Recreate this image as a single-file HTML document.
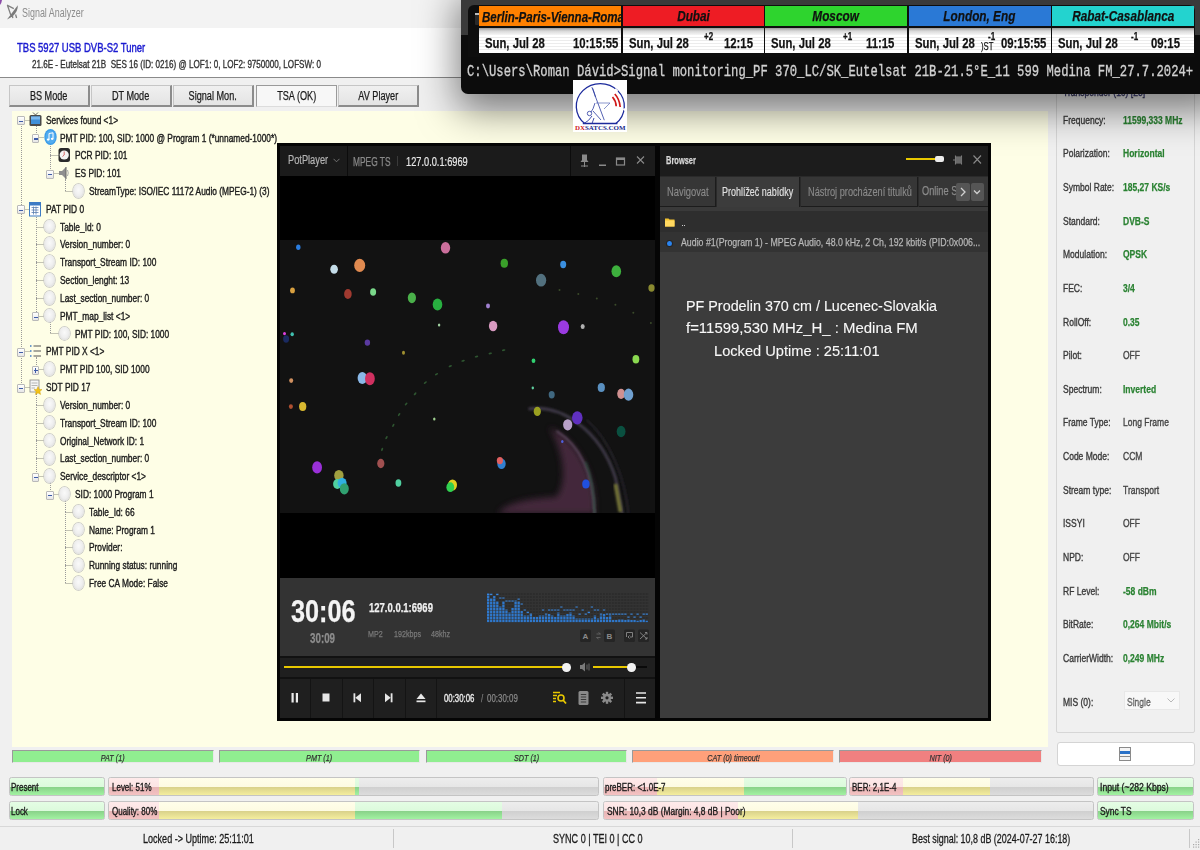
<!DOCTYPE html>
<html><head><meta charset="utf-8">
<style>
*{margin:0;padding:0;box-sizing:border-box}
html,body{width:1200px;height:850px;overflow:hidden;background:#f0f0f0;font-family:"Liberation Sans",sans-serif;position:relative}
body{-webkit-text-stroke-width:.25px}
.a{position:absolute}
.t{position:absolute;white-space:nowrap;transform-origin:0 0;transform:scaleX(.76)}
.c{display:inline-block;white-space:nowrap;transform:scaleX(.76)}
.btn{position:absolute;top:85px;height:22px;width:81px;background:linear-gradient(#f0f0f0,#e4e4e4);border:1px solid #c6c6c6;border-right:2px solid #8c8c8c;border-bottom:2px solid #8c8c8c;font-size:12px;color:#1a1a1a;text-align:center;line-height:21px}
.row{position:absolute;height:17px;font-size:11px;color:#1c1c1c;-webkit-text-stroke:.4px #1c1c1c;white-space:nowrap;line-height:17px;transform-origin:0 0;transform:scaleX(.76)}
.sb{position:absolute;top:750px;height:13px;font-size:9.5px;font-style:italic;color:#333;text-align:center;line-height:14px;border-top:1px solid #9a9a9a;border-left:1px solid #9a9a9a;border-right:1px solid #e8e8e8;border-bottom:1px solid #e8e8e8}
.pb{position:absolute;height:19px;border:1.5px solid #c4c4c4;border-radius:2.5px;overflow:hidden;background:linear-gradient(#ededed 0,#e6e6e6 52%,#cfcfcf 52%,#dcdcdc 100%)}
.pb .lbl{position:absolute;left:2.5px;top:1px;line-height:17px;font-size:10.5px;color:#1a1a1a;-webkit-text-stroke-width:.35px;white-space:nowrap;transform-origin:0 0;transform:scaleX(.76)}
.seg{position:absolute;top:0;bottom:0}
.gr{background:linear-gradient(#e4fde4 0,#dcfadc 52%,#88d088 52%,#a2f2a2 100%)}
.yl{background:linear-gradient(#fffeea 0,#fdfbe2 52%,#d8d08a 52%,#f4ee9e 100%)}
.rd{background:linear-gradient(#feeaea 0,#fce4e4 52%,#e6b4b4 52%,#f4c2c2 100%)}
.pl{position:absolute;left:1063px;font-size:11.5px;color:#3a3a3a;-webkit-text-stroke:.38px #3a3a3a;white-space:nowrap;transform-origin:0 0;transform:scaleX(.74)}
.pv{position:absolute;left:1123px;font-size:11.5px;color:#2a8232;font-weight:bold;white-space:nowrap;transform-origin:0 0;transform:scaleX(.74)}
.pv.g{color:#444;font-weight:normal;-webkit-text-stroke:.38px #444}
.st{position:absolute;top:832px;font-size:12.5px;color:#1a1a1a;-webkit-text-stroke:.3px #1a1a1a;white-space:nowrap;transform-origin:0 0;transform:scaleX(.724)}
.sph{position:absolute;width:10.8px;height:13.8px;border-radius:50%;background:radial-gradient(ellipse at 50% 42%,#fafafa 0,#eeeeee 50%,#dcdcdc 78%,#bdbdbd 100%);box-shadow:0 0 0 .7px #c2c2c2}
.exp{position:absolute;width:7.6px;height:9px;border:1px solid #b9b9b9;background:linear-gradient(#fff,#e6e6e6);border-radius:1px}
.exp:after{content:"";position:absolute;left:.9px;top:3.3px;width:4px;height:1.2px;background:#3e5ca8}
.exp.p:before{content:"";position:absolute;left:2.3px;top:1.6px;width:1.2px;height:4.6px;background:#3e5ca8}
.vl{position:absolute;width:0;border-left:1px dotted #9a9a9a}
.hl{position:absolute;height:0;border-top:1px solid #c4c4b4}
</style></head><body>
<div class="a" style="left:0;top:0;width:1200px;height:28px;background:#f3f3f3"></div>
<svg class="a" style="left:0;top:0" width="20" height="22" viewBox="0 0 20 22"><path d="M0 0 H2 Q1.6 3 0 5 Z" fill="#8a4aa8"/><path d="M7 19.5 L17.8 5.2 Q18.2 11 12.5 16.5 Z" fill="#7a7a7a"/><path d="M7 5.2 L13.8 8.6 M7.6 5.8 L10.8 15 M12.4 15.5 L12.8 18.2 M15.6 14.5 L16.6 18" stroke="#808080" stroke-width="1.3" fill="none"/></svg>
<div class="t" style="left:22px;top:6px;font-size:12.5px;color:#8c8c8c;-webkit-text-stroke-width:0;transform:scaleX(.715)">Signal Analyzer</div>
<div class="a" style="left:0;top:28px;width:1200px;height:50px;background:#fff;border-bottom:1px solid #8a8a8a"></div>
<div class="t" style="left:17px;top:40px;font-size:13px;color:#1a1ad0;-webkit-text-stroke-width:.45px;transform:scaleX(.73)">TBS 5927 USB DVB-S2 Tuner</div>
<div class="t" style="left:32px;top:58px;font-size:11px;color:#333;-webkit-text-stroke-width:.35px;transform:scaleX(.735)">21.6E - Eutelsat 21B&nbsp; SES 16 (ID: 0216) @ LOF1: 0, LOF2: 9750000, LOFSW: 0</div>

<div class="btn" style="left:9px"><span class="c">BS Mode</span></div>
<div class="btn" style="left:91px"><span class="c">DT Mode</span></div>
<div class="btn" style="left:173px"><span class="c">Signal Mon.</span></div>
<div class="btn" style="left:256px;background:#f7f7f7;border:1px solid #9a9a9a;border-right:1px solid #9a9a9a;border-bottom:1px solid #dcdcdc"><span class="c">TSA (OK)</span></div>
<div class="btn" style="left:338px"><span class="c">AV Player</span></div>

<div class="a" style="left:12px;top:111px;width:1036px;height:636px;background:#fefee6"></div>

<div class="sb" style="left:12px;width:202px;background:#90ee90"><span class="c">PAT (1)</span></div>
<div class="sb" style="left:219px;width:201px;background:#90ee90"><span class="c">PMT (1)</span></div>
<div class="sb" style="left:426px;width:201px;background:#90ee90"><span class="c">SDT (1)</span></div>
<div class="sb" style="left:632px;width:202px;background:#ffa07a"><span class="c">CAT (0) timeout!</span></div>
<div class="sb" style="left:839px;width:203px;background:#f08080"><span class="c">NIT (0)</span></div>
<div class="a" style="left:1057px;top:742px;width:138px;height:24px;background:#fff;border:1px solid #d4d4d4;border-radius:3px"></div>
<svg class="a" style="left:1119px;top:747px" width="12" height="14" viewBox="0 0 12 14"><rect x=".5" y=".5" width="11" height="13" fill="#f4f4f4" stroke="#8a8a8a"/><rect x="1" y="4" width="10" height="3" fill="#2a72c8"/><line x1="1" y1="9.5" x2="11" y2="9.5" stroke="#8a8a8a"/></svg>

<div class="pb gr" style="left:9px;top:777px;width:96px"><span class="lbl" style="left:.5px">Present</span></div>
<div class="pb gr" style="left:9px;top:801px;width:96px"><span class="lbl" style="left:.5px">Lock</span></div>
<div class="pb" style="left:108px;top:777px;width:491px"><div class="seg rd" style="left:0;width:50px"></div><div class="seg yl" style="left:50px;width:196px"></div><div class="seg gr" style="left:246px;width:4px"></div><span class="lbl">Level: 51%</span></div>
<div class="pb" style="left:108px;top:801px;width:491px"><div class="seg rd" style="left:0;width:50px"></div><div class="seg yl" style="left:50px;width:196px"></div><div class="seg gr" style="left:246px;width:147px"></div><span class="lbl">Quality: 80%</span></div>
<div class="pb" style="left:603px;top:777px;width:244px"><div class="seg rd" style="left:0;width:53px"></div><div class="seg yl" style="left:53px;width:87px"></div><div class="seg gr" style="left:140px;width:104px"></div><span class="lbl" style="left:1px">preBER: &lt;1.0E-7</span></div>
<div class="pb" style="left:849px;top:777px;width:245px"><div class="seg rd" style="left:0;width:53px"></div><div class="seg yl" style="left:53px;width:87px"></div><span class="lbl" style="left:1.5px">BER: 2,1E-4</span></div>
<div class="pb" style="left:603px;top:801px;width:491px"><div class="seg rd" style="left:0;width:134px"></div><div class="seg yl" style="left:134px;width:120px"></div><span class="lbl" style="left:2.5px;transform:scaleX(.8)">SNR: 10,3 dB (Margin: 4,8 dB | Poor)</span></div>
<div class="pb gr" style="left:1097px;top:777px;width:97px"><span class="lbl" style="left:1.5px;transform:scaleX(.82)">Input (~282 Kbps)</span></div>
<div class="pb gr" style="left:1097px;top:801px;width:97px"><span class="lbl" style="left:1.5px;transform:scaleX(.8)">Sync TS</span></div>

<div class="a" style="left:0;top:826px;width:1200px;height:24px;border-top:1px solid #d8d8d8;background:#f0f0f0"></div>
<div class="a" style="left:393px;top:829px;width:1px;height:19px;background:#c8c8c8"></div>
<div class="a" style="left:792px;top:829px;width:1px;height:19px;background:#c8c8c8"></div>
<div class="a" style="left:1189px;top:829px;width:1px;height:19px;background:#c8c8c8"></div>
<svg class="a" style="left:1191px;top:836px" width="9" height="14" viewBox="0 0 9 14"><g fill="#a8a8a8"><rect x="7" y="3" width="1.2" height="1.2"/><rect x="4.5" y="5.5" width="1.2" height="1.2"/><rect x="7" y="5.5" width="1.2" height="1.2"/><rect x="2" y="8" width="1.2" height="1.2"/><rect x="4.5" y="8" width="1.2" height="1.2"/><rect x="7" y="8" width="1.2" height="1.2"/><rect x="2" y="10.5" width="1.2" height="1.2"/><rect x="4.5" y="10.5" width="1.2" height="1.2"/><rect x="7" y="10.5" width="1.2" height="1.2"/></g></svg>
<div class="st" style="left:143px">Locked -&gt; Uptime: 25:11:01</div>
<div class="st" style="left:553px">SYNC 0 | TEI 0 | CC 0</div>
<div class="st" style="left:912px;transform:scaleX(.714)">Best signal: 10,8 dB (2024-07-27 16:18)</div>
<div class="hl" style="left:21.0px;top:119.6px;width:8.5px"></div>
<div class="vl" style="left:21.0px;top:119.6px;height:89.1px"></div>
<div class="hl" style="left:35.5px;top:137.4px;width:8.5px"></div>
<div class="vl" style="left:35.5px;top:125.6px;height:11.8px"></div>
<div class="hl" style="left:50.0px;top:155.2px;width:8.5px"></div>
<div class="vl" style="left:50.0px;top:155.2px;height:17.8px"></div>
<div class="vl" style="left:50.0px;top:143.4px;height:11.8px"></div>
<div class="hl" style="left:50.0px;top:173.1px;width:8.5px"></div>
<div class="hl" style="left:64.5px;top:190.9px;width:8.5px"></div>
<div class="vl" style="left:64.5px;top:179.1px;height:11.8px"></div>
<div class="hl" style="left:21.0px;top:208.7px;width:8.5px"></div>
<div class="vl" style="left:21.0px;top:208.7px;height:142.6px"></div>
<div class="hl" style="left:35.5px;top:226.5px;width:8.5px"></div>
<div class="vl" style="left:35.5px;top:226.5px;height:17.8px"></div>
<div class="vl" style="left:35.5px;top:214.7px;height:11.8px"></div>
<div class="hl" style="left:35.5px;top:244.3px;width:8.5px"></div>
<div class="vl" style="left:35.5px;top:244.3px;height:17.8px"></div>
<div class="hl" style="left:35.5px;top:262.2px;width:8.5px"></div>
<div class="vl" style="left:35.5px;top:262.2px;height:17.8px"></div>
<div class="hl" style="left:35.5px;top:280.0px;width:8.5px"></div>
<div class="vl" style="left:35.5px;top:280.0px;height:17.8px"></div>
<div class="hl" style="left:35.5px;top:297.8px;width:8.5px"></div>
<div class="vl" style="left:35.5px;top:297.8px;height:17.8px"></div>
<div class="hl" style="left:35.5px;top:315.6px;width:8.5px"></div>
<div class="hl" style="left:50.0px;top:333.4px;width:8.5px"></div>
<div class="vl" style="left:50.0px;top:321.6px;height:11.8px"></div>
<div class="hl" style="left:21.0px;top:351.3px;width:8.5px"></div>
<div class="vl" style="left:21.0px;top:351.3px;height:35.6px"></div>
<div class="hl" style="left:35.5px;top:369.1px;width:8.5px"></div>
<div class="vl" style="left:35.5px;top:357.3px;height:11.8px"></div>
<div class="hl" style="left:21.0px;top:386.9px;width:8.5px"></div>
<div class="hl" style="left:35.5px;top:404.7px;width:8.5px"></div>
<div class="vl" style="left:35.5px;top:404.7px;height:17.8px"></div>
<div class="vl" style="left:35.5px;top:392.9px;height:11.8px"></div>
<div class="hl" style="left:35.5px;top:422.5px;width:8.5px"></div>
<div class="vl" style="left:35.5px;top:422.5px;height:17.8px"></div>
<div class="hl" style="left:35.5px;top:440.4px;width:8.5px"></div>
<div class="vl" style="left:35.5px;top:440.4px;height:17.8px"></div>
<div class="hl" style="left:35.5px;top:458.2px;width:8.5px"></div>
<div class="vl" style="left:35.5px;top:458.2px;height:17.8px"></div>
<div class="hl" style="left:35.5px;top:476.0px;width:8.5px"></div>
<div class="hl" style="left:50.0px;top:493.8px;width:8.5px"></div>
<div class="vl" style="left:50.0px;top:482.0px;height:11.8px"></div>
<div class="hl" style="left:64.5px;top:511.6px;width:8.5px"></div>
<div class="vl" style="left:64.5px;top:511.6px;height:17.8px"></div>
<div class="vl" style="left:64.5px;top:499.8px;height:11.8px"></div>
<div class="hl" style="left:64.5px;top:529.5px;width:8.5px"></div>
<div class="vl" style="left:64.5px;top:529.5px;height:17.8px"></div>
<div class="hl" style="left:64.5px;top:547.3px;width:8.5px"></div>
<div class="vl" style="left:64.5px;top:547.3px;height:17.8px"></div>
<div class="hl" style="left:64.5px;top:565.1px;width:8.5px"></div>
<div class="vl" style="left:64.5px;top:565.1px;height:17.8px"></div>
<div class="hl" style="left:64.5px;top:582.9px;width:8.5px"></div>
<div class="exp" style="left:17.2px;top:116.3px"></div>
<!--icon tv--><svg class="a" style="left:29.0px;top:111.6px" width="13" height="16" viewBox="0 0 13 16"><path d="M4 0.5 L6.5 3 L9 0.5" stroke="#555" fill="none" stroke-width=".9"/><rect x=".5" y="3" width="12" height="11" rx="1.5" fill="#4a4a4a"/><rect x="2" y="4.5" width="9" height="7.5" fill="#3f8fd8"/><rect x="2" y="4.5" width="9" height="3" fill="#7bb8ee"/></svg>
<div class="row" style="left:45.5px;top:111.7px">Services found &lt;1&gt;</div>
<div class="exp" style="left:31.7px;top:134.1px"></div>
<!--icon music--><svg class="a" style="left:43.5px;top:129.4px" width="13" height="16" viewBox="0 0 13 16"><ellipse cx="6.5" cy="8" rx="6.2" ry="8" fill="#3a9be8"/><ellipse cx="6.5" cy="8" rx="5" ry="6.6" fill="#52acef"/><path d="M5 10.5 V4.5 L9 3.8 V9.5" stroke="#fff" fill="none" stroke-width="1"/><ellipse cx="4.2" cy="10.6" rx="1.4" ry="1.1" fill="#fff"/><ellipse cx="8.2" cy="9.8" rx="1.4" ry="1.1" fill="#fff"/></svg>
<div class="row" style="left:60.0px;top:129.5px">PMT PID: 100, SID: 1000 @ Program 1 (*unnamed-1000*)</div>
<!--icon clock--><svg class="a" style="left:58.0px;top:147.2px" width="13" height="16" viewBox="0 0 13 16"><rect x=".5" y="1" width="11.5" height="14" rx="2.5" fill="#2a2a2a"/><circle cx="6.2" cy="8" r="4.6" fill="#f4f4f4"/><path d="M6.2 8 L6.2 4.5 M6.2 8 L4.5 9.5" stroke="#c33" stroke-width=".7"/></svg>
<div class="row" style="left:74.5px;top:147.3px">PCR PID: 101</div>
<div class="exp" style="left:46.2px;top:169.8px"></div>
<!--icon speaker--><svg class="a" style="left:58.0px;top:165.1px" width="13" height="16" viewBox="0 0 13 16"><path d="M1 6 H4 L8 2 V14 L4 10 H1 Z" fill="#8f8f8f"/><path d="M8 2 V14" stroke="#666"/><path d="M9.5 5 Q11 8 9.5 11" stroke="#aaa" fill="none"/></svg>
<div class="row" style="left:74.5px;top:165.2px">ES PID: 101</div>
<div class="sph" style="left:73.4px;top:184.0px"></div>
<div class="row" style="left:89.0px;top:183.0px">StreamType: ISO/IEC 11172 Audio (MPEG-1) (3)</div>
<div class="exp" style="left:17.2px;top:205.4px"></div>
<!--icon table--><svg class="a" style="left:29.0px;top:200.7px" width="13" height="16" viewBox="0 0 13 16"><rect x=".5" y="1.5" width="11" height="13.5" fill="#fff" stroke="#3d7bc4"/><rect x=".5" y="1.5" width="11" height="3" fill="#3d7bc4"/><path d="M2.5 6.5 H9.5 M2.5 9 H9.5 M2.5 11.5 H9.5 M4.5 5.5 V13.5 M7 5.5 V13.5" stroke="#5a7fb0" stroke-width=".8"/></svg>
<div class="row" style="left:45.5px;top:200.8px">PAT PID 0</div>
<div class="sph" style="left:44.4px;top:219.6px"></div>
<div class="row" style="left:60.0px;top:218.6px">Table_Id: 0</div>
<div class="sph" style="left:44.4px;top:237.4px"></div>
<div class="row" style="left:60.0px;top:236.4px">Version_number: 0</div>
<div class="sph" style="left:44.4px;top:255.3px"></div>
<div class="row" style="left:60.0px;top:254.3px">Transport_Stream ID: 100</div>
<div class="sph" style="left:44.4px;top:273.1px"></div>
<div class="row" style="left:60.0px;top:272.1px">Section_lenght: 13</div>
<div class="sph" style="left:44.4px;top:290.9px"></div>
<div class="row" style="left:60.0px;top:289.9px">Last_section_number: 0</div>
<div class="exp" style="left:31.7px;top:312.3px"></div>
<div class="sph" style="left:44.4px;top:308.7px"></div>
<div class="row" style="left:60.0px;top:307.7px">PMT_map_list &lt;1&gt;</div>
<div class="sph" style="left:58.9px;top:326.5px"></div>
<div class="row" style="left:74.5px;top:325.5px">PMT PID: 100, SID: 1000</div>
<div class="exp" style="left:17.2px;top:348.0px"></div>
<!--icon list--><svg class="a" style="left:29.0px;top:343.3px" width="13" height="16" viewBox="0 0 13 16"><path d="M1 3 H2.5 M1 8 H2.5 M1 13 H2.5" stroke="#3d7bc4" stroke-width="1.6"/><path d="M4.5 3 H12 M4.5 8 H12 M4.5 13 H12" stroke="#555" stroke-width="1.1"/></svg>
<div class="row" style="left:45.5px;top:343.4px">PMT PID X &lt;1&gt;</div>
<div class="exp p" style="left:31.7px;top:365.8px"></div>
<div class="sph" style="left:44.4px;top:362.2px"></div>
<div class="row" style="left:60.0px;top:361.2px">PMT PID 100, SID 1000</div>
<div class="exp" style="left:17.2px;top:383.6px"></div>
<!--icon doc--><svg class="a" style="left:29.0px;top:378.9px" width="13" height="16" viewBox="0 0 13 16"><rect x="1" y="1" width="9" height="12" fill="#f6f6f6" stroke="#888" stroke-width=".8"/><path d="M2.5 4 H8.5 M2.5 6.5 H8.5 M2.5 9 H6" stroke="#999" stroke-width=".7"/><path d="M9 7.5 L10.2 10.4 L13 10.6 L10.9 12.5 L11.6 15.5 L9 13.9 L6.4 15.5 L7.1 12.5 L5 10.6 L7.8 10.4 Z" fill="#f2c21a" stroke="#c99800" stroke-width=".4"/></svg>
<div class="row" style="left:45.5px;top:379.0px">SDT PID 17</div>
<div class="sph" style="left:44.4px;top:397.8px"></div>
<div class="row" style="left:60.0px;top:396.8px">Version_number: 0</div>
<div class="sph" style="left:44.4px;top:415.6px"></div>
<div class="row" style="left:60.0px;top:414.6px">Transport_Stream ID: 100</div>
<div class="sph" style="left:44.4px;top:433.5px"></div>
<div class="row" style="left:60.0px;top:432.5px">Original_Network ID: 1</div>
<div class="sph" style="left:44.4px;top:451.3px"></div>
<div class="row" style="left:60.0px;top:450.3px">Last_section_number: 0</div>
<div class="exp" style="left:31.7px;top:472.7px"></div>
<div class="sph" style="left:44.4px;top:469.1px"></div>
<div class="row" style="left:60.0px;top:468.1px">Service_descriptor &lt;1&gt;</div>
<div class="exp" style="left:46.2px;top:490.5px"></div>
<div class="sph" style="left:58.9px;top:486.9px"></div>
<div class="row" style="left:74.5px;top:485.9px">SID: 1000 Program 1</div>
<div class="sph" style="left:73.4px;top:504.7px"></div>
<div class="row" style="left:89.0px;top:503.7px">Table_Id: 66</div>
<div class="sph" style="left:73.4px;top:522.6px"></div>
<div class="row" style="left:89.0px;top:521.6px">Name: Program 1</div>
<div class="sph" style="left:73.4px;top:540.4px"></div>
<div class="row" style="left:89.0px;top:539.4px">Provider:</div>
<div class="sph" style="left:73.4px;top:558.2px"></div>
<div class="row" style="left:89.0px;top:557.2px">Running status: running</div>
<div class="sph" style="left:73.4px;top:576.0px"></div>
<div class="row" style="left:89.0px;top:575.0px">Free CA Mode: False</div>
<div class="a" style="left:1056px;top:86px;width:139px;height:647px;border:1px solid #d6d6d6;border-radius:2px;background:#f0f0f0"></div>
<div class="pl" style="left:1063px;top:86px;color:#3636b0">Transponder (16) [23]</div>
<div class="pl" style="top:113.7px">Frequency:</div>
<div class="pv" style="top:113.7px">11599,333 MHz</div>
<div class="pl" style="top:147.3px">Polarization:</div>
<div class="pv" style="top:147.3px">Horizontal</div>
<div class="pl" style="top:180.9px">Symbol Rate:</div>
<div class="pv" style="top:180.9px">185,27 KS/s</div>
<div class="pl" style="top:214.6px">Standard:</div>
<div class="pv" style="top:214.6px">DVB-S</div>
<div class="pl" style="top:248.2px">Modulation:</div>
<div class="pv" style="top:248.2px">QPSK</div>
<div class="pl" style="top:281.8px">FEC:</div>
<div class="pv" style="top:281.8px">3/4</div>
<div class="pl" style="top:315.5px">RollOff:</div>
<div class="pv" style="top:315.5px">0.35</div>
<div class="pl" style="top:349.1px">Pilot:</div>
<div class="pv g" style="top:349.1px">OFF</div>
<div class="pl" style="top:382.7px">Spectrum:</div>
<div class="pv" style="top:382.7px">Inverted</div>
<div class="pl" style="top:416.3px">Frame Type:</div>
<div class="pv g" style="top:416.3px">Long Frame</div>
<div class="pl" style="top:450.0px">Code Mode:</div>
<div class="pv g" style="top:450.0px">CCM</div>
<div class="pl" style="top:483.6px">Stream type:</div>
<div class="pv g" style="top:483.6px">Transport</div>
<div class="pl" style="top:517.2px">ISSYI</div>
<div class="pv g" style="top:517.2px">OFF</div>
<div class="pl" style="top:550.8px">NPD:</div>
<div class="pv g" style="top:550.8px">OFF</div>
<div class="pl" style="top:584.5px">RF Level:</div>
<div class="pv" style="top:584.5px">-58 dBm</div>
<div class="pl" style="top:618.1px">BitRate:</div>
<div class="pv" style="top:618.1px">0,264 Mbit/s</div>
<div class="pl" style="top:651.7px">CarrierWidth:</div>
<div class="pv" style="top:651.7px">0,249 MHz</div>
<div class="pl" style="top:696.3px">MIS (0):</div>
<div class="a" style="left:1124px;top:691px;width:56px;height:19px;background:#f8f8f8;border:1px solid #e8e8e8"></div>
<div class="pv g" style="left:1127px;top:696.3px;color:#9a9a9a">Single</div>
<svg class="a" style="left:1167px;top:698px" width="8" height="5" viewBox="0 0 8 5"><path d="M.5 .5 L4 4 L7.5 .5" stroke="#b0b0b0" fill="none" stroke-width=".9"/></svg>
<div class="a" style="left:461px;top:-10px;width:760px;height:103.5px;border-radius:0 0 0 7px;background:#0c0c0c;box-shadow:0 12px 38px 4px rgba(0,0,0,.5)"></div>
<div class="a" style="left:461px;top:0;width:739px;height:35px;background:#3a3a3a"></div>
<div class="a" style="left:468px;top:4.5px;width:727px;height:52px;background:#0e0e0e;border-radius:6px 6px 0 0"></div>
<div class="a" style="left:1195px;top:0;width:5px;height:35px;background:#3a3a3a"></div>
<div class="a" style="left:474.5px;top:13px;width:4.5px;height:12px;background:#2a2a2a;border-radius:1px"></div><div class="a" style="left:475px;top:13px;width:4px;height:2px;background:#bbb"></div>
<div class="a" style="left:479px;top:6px;width:142px;height:20.3px;background:#ff8000"></div>
<div class="a" style="left:479px;top:27.5px;width:142px;height:25.2px;background:linear-gradient(#9a9a9a 0,#d8d8d8 3px,#f6f6f6 7px,#fff 100%)"></div>
<div class="a" style="left:479px;top:35px;width:142px;height:17px;background:repeating-linear-gradient(#fff 0,#fff 2px,#ececec 2px,#ececec 3px)"></div>
<div class="t" style="left:481.5px;top:7.5px;font-size:15.5px;font-weight:bold;font-style:italic;color:#111;transform:scaleX(.745)">Berlin-Paris-Vienna-Roma</div>
<div class="t" style="left:485px;top:33.5px;font-size:15.5px;font-weight:bold;color:#111;transform:scaleX(.73)">Sun, Jul 28</div>
<div class="t" style="left:572.5px;top:33.5px;font-size:15.5px;font-weight:bold;color:#111;transform:scaleX(.73)">10:15:55</div>
<div class="a" style="left:622.5px;top:6px;width:141.5px;height:20.3px;background:#ee1c24"></div>
<div class="a" style="left:622.5px;top:27.5px;width:141.5px;height:25.2px;background:linear-gradient(#9a9a9a 0,#d8d8d8 3px,#f6f6f6 7px,#fff 100%)"></div>
<div class="a" style="left:622.5px;top:35px;width:141.5px;height:17px;background:repeating-linear-gradient(#fff 0,#fff 2px,#ececec 2px,#ececec 3px)"></div>
<div class="a" style="left:622.5px;top:6px;width:141.5px;height:20.3px;display:flex;justify-content:center;line-height:20px;overflow:hidden"><span class="c" style="font-size:15.5px;font-weight:bold;font-style:italic;color:#111;transform:scaleX(.76)">Dubai</span></div>
<div class="t" style="left:628.5px;top:33.5px;font-size:15.5px;font-weight:bold;color:#111;transform:scaleX(.73)">Sun, Jul 28</div>
<div class="t" style="left:723.6px;top:33.5px;font-size:15.5px;font-weight:bold;color:#111;transform:scaleX(.73)">12:15</div>
<div class="t" style="left:704px;top:30.5px;font-size:10px;font-weight:bold;color:#111;transform:scaleX(.8)">+2</div>
<div class="a" style="left:765px;top:6px;width:142px;height:20.3px;background:#2ed42e"></div>
<div class="a" style="left:765px;top:27.5px;width:142px;height:25.2px;background:linear-gradient(#9a9a9a 0,#d8d8d8 3px,#f6f6f6 7px,#fff 100%)"></div>
<div class="a" style="left:765px;top:35px;width:142px;height:17px;background:repeating-linear-gradient(#fff 0,#fff 2px,#ececec 2px,#ececec 3px)"></div>
<div class="a" style="left:765px;top:6px;width:142px;height:20.3px;display:flex;justify-content:center;line-height:20px;overflow:hidden"><span class="c" style="font-size:15.5px;font-weight:bold;font-style:italic;color:#111;transform:scaleX(.76)">Moscow</span></div>
<div class="t" style="left:771px;top:33.5px;font-size:15.5px;font-weight:bold;color:#111;transform:scaleX(.73)">Sun, Jul 28</div>
<div class="t" style="left:866.0px;top:33.5px;font-size:15.5px;font-weight:bold;color:#111;transform:scaleX(.73)">11:15</div>
<div class="t" style="left:843px;top:30.5px;font-size:10px;font-weight:bold;color:#111;transform:scaleX(.8)">+1</div>
<div class="a" style="left:908.5px;top:6px;width:142.0px;height:20.3px;background:#2a79d6"></div>
<div class="a" style="left:908.5px;top:27.5px;width:142.0px;height:25.2px;background:linear-gradient(#9a9a9a 0,#d8d8d8 3px,#f6f6f6 7px,#fff 100%)"></div>
<div class="a" style="left:908.5px;top:35px;width:142.0px;height:17px;background:repeating-linear-gradient(#fff 0,#fff 2px,#ececec 2px,#ececec 3px)"></div>
<div class="a" style="left:908.5px;top:6px;width:142.0px;height:20.3px;display:flex;justify-content:center;line-height:20px;overflow:hidden"><span class="c" style="font-size:15.5px;font-weight:bold;font-style:italic;color:#111;transform:scaleX(.76)">London, Eng</span></div>
<div class="t" style="left:914.5px;top:33.5px;font-size:15.5px;font-weight:bold;color:#111;transform:scaleX(.73)">Sun, Jul 28</div>
<div class="t" style="left:1001.3px;top:33.5px;font-size:15.5px;font-weight:bold;color:#111;transform:scaleX(.73)">09:15:55</div>
<div class="t" style="left:988px;top:30.5px;font-size:10px;font-weight:bold;color:#111;transform:scaleX(.8)">-1</div>
<div class="t" style="left:980.5px;top:39.5px;font-size:11px;color:#111;transform:scaleX(.7)">)ST</div>
<div class="a" style="left:1052px;top:6px;width:142px;height:20.3px;background:#23d3cf"></div>
<div class="a" style="left:1052px;top:27.5px;width:142px;height:25.2px;background:linear-gradient(#9a9a9a 0,#d8d8d8 3px,#f6f6f6 7px,#fff 100%)"></div>
<div class="a" style="left:1052px;top:35px;width:142px;height:17px;background:repeating-linear-gradient(#fff 0,#fff 2px,#ececec 2px,#ececec 3px)"></div>
<div class="a" style="left:1052px;top:6px;width:142px;height:20.3px;display:flex;justify-content:center;line-height:20px;overflow:hidden"><span class="c" style="font-size:15.5px;font-weight:bold;font-style:italic;color:#111;transform:scaleX(.76)">Rabat-Casablanca</span></div>
<div class="t" style="left:1058px;top:33.5px;font-size:15.5px;font-weight:bold;color:#111;transform:scaleX(.73)">Sun, Jul 28</div>
<div class="t" style="left:1151.0px;top:33.5px;font-size:15.5px;font-weight:bold;color:#111;transform:scaleX(.73)">09:15</div>
<div class="t" style="left:1131px;top:30.5px;font-size:10px;font-weight:bold;color:#111;transform:scaleX(.8)">-1</div>
<div class="t" style="left:467px;top:61.5px;font-family:'Liberation Mono',monospace;font-size:17px;color:#d0d0d0;-webkit-text-stroke:.35px #d0d0d0;transform:scaleX(.719)">C:\Users\Roman Dávid&gt;Signal monitoring_PF 370_LC/SK_Eutelsat 21B-21.5°E_11 599 Medina FM_27.7.2024+</div>
<div class="a" style="left:277px;top:142.5px;width:713.5px;height:578px;background:#050505"></div>
<div class="a" style="left:279.5px;top:145.5px;width:375.5px;height:30px;background:#1b1b1b"></div>
<div class="a" style="left:347px;top:145.5px;width:1.2px;height:30px;background:#0c0c0c"></div>
<div class="a" style="left:570.3px;top:145.5px;width:1.2px;height:30px;background:#0c0c0c"></div>
<div class="t" style="left:288px;top:153px;font-size:12.5px;color:#b4b4b4;-webkit-text-stroke:.2px #b4b4b4;transform:scaleX(.74)">PotPlayer</div>
<svg class="a" style="left:333px;top:158px" width="7" height="5" viewBox="0 0 7 5"><path d="M.5 .8 L3.5 3.8 L6.5 .8" stroke="#888" fill="none" stroke-width=".8"/></svg>
<div class="t" style="left:352.6px;top:154.5px;font-size:12.5px;color:#8a8a8a;transform:scaleX(.67)">MPEG TS</div>
<div class="a" style="left:397.3px;top:156px;width:1px;height:10px;background:#3a3a3a"></div>
<div class="t" style="left:406.3px;top:154.5px;font-size:12.5px;color:#e8e8e8;-webkit-text-stroke:.2px #e8e8e8;transform:scaleX(.74)">127.0.0.1:6969</div>
<svg class="a" style="left:578px;top:152px" width="72" height="18" viewBox="0 0 72 18"><path d="M4 2.5 H9 V8 L10.5 10 H2.5 L4 8 Z" fill="#8a8a8a"/><rect x="6" y="10" width="1" height="5" fill="#8a8a8a"/><rect x="3" y="13.5" width="7" height="1" fill="#8a8a8a"/><rect x="21" y="12.5" width="7" height="1.5" fill="#8a8a8a"/><rect x="38.5" y="6" width="8" height="7" fill="none" stroke="#8a8a8a" stroke-width="1.2"/><rect x="38.5" y="6" width="8" height="2" fill="#8a8a8a"/><path d="M59 4.5 L66 11.5 M66 4.5 L59 11.5" stroke="#8a8a8a" stroke-width="1.1"/></svg>
<div class="a" style="left:279.5px;top:175.5px;width:375.5px;height:64.5px;background:#000"></div>
<div class="a" style="left:279.5px;top:240px;width:375.5px;height:272.5px;background:#121212;overflow:hidden">
<svg class="a" style="left:0;top:0" width="376" height="273" viewBox="279.5 240 376 273"><defs><filter id="bl" x="-50%" y="-50%" width="200%" height="200%"><feGaussianBlur stdDeviation="3"/></filter></defs><defs><filter id="b2" x="-50%" y="-50%" width="200%" height="200%"><feGaussianBlur stdDeviation="1.2"/></filter></defs><path d="M549 427 C575 440 592 470 594 500 L594 514 L498 514 C503 503 530 498 556 497 C568 480 562 450 549 427 Z" fill="#4a2a40" opacity=".9" filter="url(#bl)"/><path d="M556 431 C580 446 592 472 594 514" stroke="#5e4a60" stroke-width="2" fill="none" filter="url(#b2)"/><path d="M585 462 C591 476 594 492 594 514" stroke="#2f5040" stroke-width="1.6" fill="none" filter="url(#b2)"/><path d="M528 409 C560 404 600 430 615 478 L622 514" stroke="#3e3846" stroke-width="3" fill="none" filter="url(#b2)"/><path d="M586 420 C610 440 625 480 628 514" stroke="#2a2830" stroke-width="1.5" fill="none" filter="url(#b2)"/><path d="M615 484 L620 512" stroke="#6e6e36" stroke-width="4" fill="none" filter="url(#b2)"/><ellipse cx="381.6" cy="449.4" rx="1.8" ry=".9" fill="#2e5530" transform="rotate(-70 381.6 449.4)"/><ellipse cx="386" cy="437.6" rx="1.8" ry=".9" fill="#2e5530" transform="rotate(-61 386 437.6)"/><ellipse cx="392.8" cy="425.4" rx="1.8" ry=".9" fill="#2e5530" transform="rotate(-62 392.8 425.4)"/><ellipse cx="398.6" cy="414.6" rx="1.8" ry=".9" fill="#2e5530" transform="rotate(-57 398.6 414.6)"/><ellipse cx="405.6" cy="404" rx="1.8" ry=".9" fill="#2e5530" transform="rotate(-49 405.6 404)"/><ellipse cx="414.6" cy="393.8" rx="1.8" ry=".9" fill="#2e5530" transform="rotate(-48 414.6 393.8)"/><ellipse cx="424.8" cy="382.6" rx="1.8" ry=".9" fill="#2e5530" transform="rotate(-37 424.8 382.6)"/><ellipse cx="436" cy="374.2" rx="1.8" ry=".9" fill="#2e5530" transform="rotate(-30 436 374.2)"/><ellipse cx="449.8" cy="366.2" rx="1.8" ry=".9" fill="#2e5530" transform="rotate(-23 449.8 366.2)"/><ellipse cx="462.6" cy="360.8" rx="1.8" ry=".9" fill="#2e5530" transform="rotate(-17 462.6 360.8)"/><ellipse cx="476" cy="356.6" rx="1.8" ry=".9" fill="#2e5530" transform="rotate(-13 476 356.6)"/><ellipse cx="489.8" cy="353.4" rx="1.8" ry=".9" fill="#2e5530" transform="rotate(-13 489.8 353.4)"/><ellipse cx="503.2" cy="350.2" rx="1.8" ry=".9" fill="#2e5530" transform="rotate(-13 503.2 350.2)"/><circle cx="559" cy="290" r="1" fill="#3a4a2a"/><circle cx="577.8" cy="294" r="1" fill="#3a4a2a"/><circle cx="596.3" cy="298.4" r="1" fill="#3a4a2a"/><circle cx="614.9" cy="304.8" r="1" fill="#3a4a2a"/><circle cx="632.8" cy="312.8" r="1" fill="#3a4a2a"/><circle cx="650.4" cy="323" r="1" fill="#3a4a2a"/><ellipse cx="297.8" cy="247.2" rx="2.2" ry="2.7" fill="#2a7de0"/><ellipse cx="445" cy="247.8" rx="4.7" ry="5.8" fill="#cc6f9c"/><ellipse cx="333.6" cy="269.3" rx="3.8" ry="4.5" fill="#c4dce8"/><ellipse cx="359.2" cy="265.4" rx="5.5" ry="6.6" fill="#e08a50"/><ellipse cx="503.8" cy="263.2" rx="3.7" ry="4.5" fill="#3aa02a"/><ellipse cx="562.7" cy="264.5" rx="3.0" ry="3.7" fill="#3a8fe0"/><ellipse cx="540.6" cy="280.2" rx="5.1" ry="6.4" fill="#52707e"/><ellipse cx="615.8" cy="271.2" rx="4.8" ry="6.0" fill="#3db03d"/><ellipse cx="651" cy="288" rx="3.1" ry="3.7" fill="#8a8a30"/><ellipse cx="292" cy="290.4" rx="2.4" ry="2.9" fill="#d8a040"/><ellipse cx="347.4" cy="294" rx="3.8" ry="4.9" fill="#a03a30"/><ellipse cx="372.6" cy="292" rx="3.0" ry="3.8" fill="#7ad88a"/><ellipse cx="411.4" cy="297.8" rx="4.1" ry="5.4" fill="#4ab04a"/><ellipse cx="437" cy="304.5" rx="4.8" ry="6.1" fill="#28b040"/><ellipse cx="487.5" cy="306" rx="2.0" ry="2.4" fill="#a080d0"/><ellipse cx="492.6" cy="326" rx="4.2" ry="5.3" fill="#d89ac0"/><ellipse cx="563" cy="327.2" rx="5.5" ry="7.0" fill="#9a3ae0"/><ellipse cx="582.2" cy="326.6" rx="2.0" ry="2.5" fill="#b0b0b0"/><ellipse cx="438.6" cy="325" rx="1.2" ry="1.5" fill="#a0d0a0"/><ellipse cx="284" cy="333.6" rx="1.5" ry="1.7" fill="#e040e0"/><ellipse cx="291.7" cy="334.2" rx="1.7" ry="2.0" fill="#40c0b0"/><ellipse cx="285.6" cy="339" rx="3.0" ry="3.7" fill="#1a2a60"/><ellipse cx="366.9" cy="342.6" rx="2.7" ry="3.2" fill="#5a3aa0"/><ellipse cx="403" cy="352.8" rx="1.5" ry="2.0" fill="#a09030"/><ellipse cx="533" cy="360.8" rx="1.9" ry="2.3" fill="#30d070"/><ellipse cx="635.4" cy="359.2" rx="3.4" ry="4.2" fill="#8ad850"/><ellipse cx="361.8" cy="378" rx="4.7" ry="6.0" fill="#8ab8e8"/><ellipse cx="369.4" cy="378.7" rx="4.9" ry="6.5" fill="#d03060"/><ellipse cx="290.7" cy="380.6" rx="2.0" ry="2.4" fill="#d09060"/><ellipse cx="532.3" cy="388" rx="1.2" ry="1.4" fill="#60d0a0"/><ellipse cx="551.2" cy="394.7" rx="3.0" ry="3.7" fill="#406880"/><ellipse cx="600.8" cy="387.4" rx="3.6" ry="4.5" fill="#5a90c0"/><ellipse cx="620.6" cy="393.8" rx="3.9" ry="5.1" fill="#d09090"/><ellipse cx="628" cy="394.7" rx="4.8" ry="6.1" fill="#70a0d0"/><ellipse cx="290.4" cy="406.6" rx="2.0" ry="2.4" fill="#b05030"/><ellipse cx="302.2" cy="406.6" rx="3.6" ry="4.5" fill="#d8b830"/><ellipse cx="536.8" cy="411.4" rx="3.6" ry="4.7" fill="#9aa020"/><ellipse cx="576.8" cy="417.8" rx="5.3" ry="6.6" fill="#6030c0"/><ellipse cx="567.2" cy="424.8" rx="4.6" ry="5.6" fill="#b8a0c8"/><ellipse cx="620.6" cy="431.5" rx="4.4" ry="5.8" fill="#0a5040"/><ellipse cx="433.8" cy="419" rx="1.2" ry="1.5" fill="#a0d090"/><ellipse cx="316.6" cy="467.4" rx="4.9" ry="6.1" fill="#9a30d8"/><ellipse cx="338.4" cy="475.4" rx="4.7" ry="5.5" fill="#a0a040"/><ellipse cx="336.8" cy="484" rx="4.2" ry="4.9" fill="#50d0a0"/><ellipse cx="341.6" cy="483" rx="4.5" ry="5.3" fill="#30b0e0"/><ellipse cx="343.8" cy="488.8" rx="4.5" ry="5.6" fill="#30a070"/><ellipse cx="380.3" cy="463.5" rx="3.6" ry="4.7" fill="#a05050"/><ellipse cx="397.9" cy="483" rx="2.9" ry="3.7" fill="#50d0a0"/><ellipse cx="452" cy="485" rx="4.5" ry="5.6" fill="#e0d020"/><ellipse cx="449.8" cy="487.2" rx="3.9" ry="4.9" fill="#30d050"/><ellipse cx="501" cy="463.8" rx="4.2" ry="5.3" fill="#3080d0"/><ellipse cx="499.4" cy="460.6" rx="3.1" ry="3.7" fill="#e06060"/><ellipse cx="585.4" cy="484" rx="3.7" ry="4.5" fill="#2050e0"/><ellipse cx="561.8" cy="441.4" rx="1.2" ry="1.5" fill="#5060e0"/></svg>
</div>
<div class="a" style="left:279.5px;top:512.5px;width:375.5px;height:65.5px;background:#000"></div>
<div class="a" style="left:279.5px;top:578px;width:375.5px;height:78px;background:#333333"></div>
<div class="t" style="left:291px;top:593px;font-size:32px;font-weight:bold;color:#f4f4f4;transform:scaleX(.79)">30:06</div>
<div class="t" style="left:310px;top:629.5px;font-size:14px;font-weight:bold;color:#8c8c8c;transform:scaleX(.7)">30:09</div>
<div class="t" style="left:368.8px;top:601px;font-size:12.5px;font-weight:bold;color:#f0f0f0;transform:scaleX(.76)">127.0.0.1:6969</div>
<div class="t" style="left:367.5px;top:628px;font-size:9.5px;color:#7a7a7a;transform:scaleX(.75)">MP2</div>
<div class="t" style="left:393.5px;top:628px;font-size:9.5px;color:#7a7a7a;transform:scaleX(.75)">192kbps</div>
<div class="t" style="left:431px;top:628px;font-size:9.5px;color:#7a7a7a;transform:scaleX(.75)">48khz</div>
<svg class="a" style="left:486.5px;top:592.5px" width="162" height="30" viewBox="0 0 162 30"><defs><pattern id="gp" width="3.05" height="3" patternUnits="userSpaceOnUse"><rect width="2.2" height="2" fill="#2c2c2c"/></pattern></defs><rect width="162" height="30" fill="url(#gp)"/><rect x="0.00" y="0.7" width="2.3" height="28.5" fill="#2f78cc"/><rect x="0.00" y="0.7" width="2.3" height="1.5" fill="#3a86dc"/><rect x="3.05" y="5.2" width="2.3" height="24.0" fill="#2f78cc"/><rect x="3.05" y="0.7" width="2.3" height="1.5" fill="#3a86dc"/><rect x="6.10" y="3.0" width="2.3" height="26.2" fill="#2f78cc"/><rect x="9.15" y="8.2" width="2.3" height="21.0" fill="#2f78cc"/><rect x="9.15" y="0.7" width="2.3" height="1.5" fill="#3a86dc"/><rect x="12.20" y="13.5" width="2.3" height="15.7" fill="#2f78cc"/><rect x="12.20" y="4.5" width="2.3" height="1.5" fill="#3a86dc"/><rect x="15.25" y="8.2" width="2.3" height="21.0" fill="#2f78cc"/><rect x="15.25" y="4.5" width="2.3" height="1.5" fill="#3a86dc"/><rect x="18.30" y="16.5" width="2.3" height="12.7" fill="#2f78cc"/><rect x="18.30" y="7.5" width="2.3" height="1.5" fill="#3a86dc"/><rect x="21.35" y="19.5" width="2.3" height="9.7" fill="#2f78cc"/><rect x="21.35" y="7.5" width="2.3" height="1.5" fill="#3a86dc"/><rect x="24.40" y="15.0" width="2.3" height="14.2" fill="#2f78cc"/><rect x="24.40" y="7.5" width="2.3" height="1.5" fill="#3a86dc"/><rect x="27.45" y="7.5" width="2.3" height="21.7" fill="#2f78cc"/><rect x="30.50" y="8.2" width="2.3" height="21.0" fill="#2f78cc"/><rect x="30.50" y="5.2" width="2.3" height="1.5" fill="#3a86dc"/><rect x="33.55" y="18.0" width="2.3" height="11.2" fill="#2f78cc"/><rect x="33.55" y="10.5" width="2.3" height="1.5" fill="#3a86dc"/><rect x="36.60" y="22.5" width="2.3" height="6.7" fill="#2f78cc"/><rect x="36.60" y="16.5" width="2.3" height="1.5" fill="#3a86dc"/><rect x="39.65" y="22.5" width="2.3" height="6.7" fill="#2f78cc"/><rect x="39.65" y="18.7" width="2.3" height="1.5" fill="#3a86dc"/><rect x="42.70" y="21.7" width="2.3" height="7.5" fill="#2f78cc"/><rect x="42.70" y="20.2" width="2.3" height="1.5" fill="#3a86dc"/><rect x="45.75" y="24.0" width="2.3" height="5.2" fill="#2f78cc"/><rect x="48.80" y="24.0" width="2.3" height="5.2" fill="#2f78cc"/><rect x="51.85" y="22.5" width="2.3" height="6.7" fill="#2f78cc"/><rect x="54.90" y="22.5" width="2.3" height="6.7" fill="#2f78cc"/><rect x="54.90" y="16.5" width="2.3" height="1.5" fill="#3a86dc"/><rect x="57.95" y="22.5" width="2.3" height="6.7" fill="#2f78cc"/><rect x="57.95" y="20.2" width="2.3" height="1.5" fill="#3a86dc"/><rect x="61.00" y="21.0" width="2.3" height="8.2" fill="#2f78cc"/><rect x="61.00" y="16.5" width="2.3" height="1.5" fill="#3a86dc"/><rect x="64.05" y="22.5" width="2.3" height="6.7" fill="#2f78cc"/><rect x="64.05" y="16.5" width="2.3" height="1.5" fill="#3a86dc"/><rect x="67.10" y="24.0" width="2.3" height="5.2" fill="#2f78cc"/><rect x="67.10" y="16.5" width="2.3" height="1.5" fill="#3a86dc"/><rect x="70.15" y="19.5" width="2.3" height="9.7" fill="#2f78cc"/><rect x="70.15" y="16.5" width="2.3" height="1.5" fill="#3a86dc"/><rect x="73.20" y="22.5" width="2.3" height="6.7" fill="#2f78cc"/><rect x="73.20" y="13.5" width="2.3" height="1.5" fill="#3a86dc"/><rect x="76.25" y="22.5" width="2.3" height="6.7" fill="#2f78cc"/><rect x="76.25" y="16.5" width="2.3" height="1.5" fill="#3a86dc"/><rect x="79.30" y="21.0" width="2.3" height="8.2" fill="#2f78cc"/><rect x="79.30" y="16.5" width="2.3" height="1.5" fill="#3a86dc"/><rect x="82.35" y="19.5" width="2.3" height="9.7" fill="#2f78cc"/><rect x="82.35" y="16.5" width="2.3" height="1.5" fill="#3a86dc"/><rect x="85.40" y="22.5" width="2.3" height="6.7" fill="#2f78cc"/><rect x="85.40" y="16.5" width="2.3" height="1.5" fill="#3a86dc"/><rect x="88.45" y="25.5" width="2.3" height="3.7" fill="#2f78cc"/><rect x="88.45" y="13.5" width="2.3" height="1.5" fill="#3a86dc"/><rect x="91.50" y="25.5" width="2.3" height="3.7" fill="#2f78cc"/><rect x="91.50" y="20.2" width="2.3" height="1.5" fill="#3a86dc"/><rect x="94.55" y="25.5" width="2.3" height="3.7" fill="#2f78cc"/><rect x="94.55" y="16.5" width="2.3" height="1.5" fill="#3a86dc"/><rect x="97.60" y="25.5" width="2.3" height="3.7" fill="#2f78cc"/><rect x="97.60" y="20.2" width="2.3" height="1.5" fill="#3a86dc"/><rect x="100.65" y="25.5" width="2.3" height="3.7" fill="#2f78cc"/><rect x="100.65" y="18.7" width="2.3" height="1.5" fill="#3a86dc"/><rect x="103.70" y="25.5" width="2.3" height="3.7" fill="#2f78cc"/><rect x="103.70" y="13.5" width="2.3" height="1.5" fill="#3a86dc"/><rect x="106.75" y="22.5" width="2.3" height="6.7" fill="#2f78cc"/><rect x="106.75" y="16.5" width="2.3" height="1.5" fill="#3a86dc"/><rect x="109.80" y="25.5" width="2.3" height="3.7" fill="#2f78cc"/><rect x="109.80" y="16.5" width="2.3" height="1.5" fill="#3a86dc"/><rect x="112.85" y="22.5" width="2.3" height="6.7" fill="#2f78cc"/><rect x="112.85" y="20.2" width="2.3" height="1.5" fill="#3a86dc"/><rect x="115.90" y="21.0" width="2.3" height="8.2" fill="#2f78cc"/><rect x="115.90" y="16.5" width="2.3" height="1.5" fill="#3a86dc"/><rect x="118.95" y="24.0" width="2.3" height="5.2" fill="#2f78cc"/><rect x="118.95" y="20.2" width="2.3" height="1.5" fill="#3a86dc"/><rect x="122.00" y="22.5" width="2.3" height="6.7" fill="#2f78cc"/><rect x="122.00" y="20.2" width="2.3" height="1.5" fill="#3a86dc"/><rect x="125.05" y="27.0" width="2.3" height="2.2" fill="#2f78cc"/><rect x="125.05" y="20.2" width="2.3" height="1.5" fill="#3a86dc"/><rect x="128.10" y="27.0" width="2.3" height="2.2" fill="#2f78cc"/><rect x="128.10" y="20.2" width="2.3" height="1.5" fill="#3a86dc"/><rect x="131.15" y="26.2" width="2.3" height="3.0" fill="#2f78cc"/><rect x="131.15" y="20.2" width="2.3" height="1.5" fill="#3a86dc"/><rect x="134.20" y="26.2" width="2.3" height="3.0" fill="#2f78cc"/><rect x="134.20" y="20.2" width="2.3" height="1.5" fill="#3a86dc"/><rect x="137.25" y="27.0" width="2.3" height="2.2" fill="#2f78cc"/><rect x="137.25" y="20.2" width="2.3" height="1.5" fill="#3a86dc"/><rect x="140.30" y="26.2" width="2.3" height="3.0" fill="#2f78cc"/><rect x="140.30" y="23.2" width="2.3" height="1.5" fill="#3a86dc"/><rect x="143.35" y="27.0" width="2.3" height="2.2" fill="#2f78cc"/><rect x="143.35" y="20.2" width="2.3" height="1.5" fill="#3a86dc"/><rect x="146.40" y="27.0" width="2.3" height="2.2" fill="#2f78cc"/><rect x="146.40" y="23.2" width="2.3" height="1.5" fill="#3a86dc"/><rect x="149.45" y="27.7" width="2.3" height="1.5" fill="#2f78cc"/><rect x="149.45" y="20.2" width="2.3" height="1.5" fill="#3a86dc"/><rect x="152.50" y="27.0" width="2.3" height="2.2" fill="#2f78cc"/><rect x="152.50" y="23.2" width="2.3" height="1.5" fill="#3a86dc"/><rect x="155.55" y="26.2" width="2.3" height="3.0" fill="#2f78cc"/><rect x="155.55" y="20.2" width="2.3" height="1.5" fill="#3a86dc"/><rect x="158.60" y="27.7" width="2.3" height="1.5" fill="#2f78cc"/><rect x="158.60" y="20.2" width="2.3" height="1.5" fill="#3a86dc"/><rect x="0" y="2" width="162" height="1" fill="#333" opacity=".45"/><rect x="0" y="5" width="162" height="1" fill="#333" opacity=".45"/><rect x="0" y="8" width="162" height="1" fill="#333" opacity=".45"/><rect x="0" y="11" width="162" height="1" fill="#333" opacity=".45"/><rect x="0" y="14" width="162" height="1" fill="#333" opacity=".45"/><rect x="0" y="17" width="162" height="1" fill="#333" opacity=".45"/><rect x="0" y="20" width="162" height="1" fill="#333" opacity=".45"/><rect x="0" y="23" width="162" height="1" fill="#333" opacity=".45"/><rect x="0" y="26" width="162" height="1" fill="#333" opacity=".45"/><rect x="0" y="29" width="162" height="1" fill="#333" opacity=".45"/></svg>
<svg class="a" style="left:579px;top:628.5px" width="72" height="14" viewBox="0 0 72 14"><rect x="1" y=".5" width="11" height="12.5" rx="1.5" fill="#252525"/><text x="6.5" y="10" font-size="8" font-weight="bold" fill="#8a8a8a" text-anchor="middle" font-family="Liberation Sans">A</text><path d="M17.5 5 H21.5 M19.5 3.5 L21.5 5 M21.5 8.5 H17.5 M19.5 10 L17.5 8.5" stroke="#6a6a6a" stroke-width=".8" fill="none"/><rect x="25" y=".5" width="11" height="12.5" rx="1.5" fill="#252525"/><text x="30.5" y="10" font-size="8" font-weight="bold" fill="#8a8a8a" text-anchor="middle" font-family="Liberation Sans">B</text><rect x="45" y=".5" width="11" height="12.5" rx="1.5" fill="#252525"/><path d="M47.5 8 V3.5 H53.5 V8 H51 M50.5 6.5 L49 8 L50.5 9.5" stroke="#8a8a8a" stroke-width=".9" fill="none"/><rect x="59" y=".5" width="11" height="12.5" rx="1.5" fill="#252525"/><path d="M61 3.5 L68 10 M61 10 L68 3.5 M66 3.5 H68 V5.5 M66 10 H68 V8" stroke="#8a8a8a" stroke-width=".9" fill="none"/></svg>
<div class="a" style="left:279.5px;top:656px;width:375.5px;height:1.5px;background:#111"></div>
<div class="a" style="left:279.5px;top:657.5px;width:375.5px;height:19.5px;background:#1f1f1f"></div>
<div class="a" style="left:284px;top:666px;width:282px;height:2px;background:#e8c800"></div>
<div class="a" style="left:562px;top:662.5px;width:8.5px;height:9px;border-radius:50%;background:#f2f2f2"></div>
<svg class="a" style="left:579px;top:661px" width="12" height="12" viewBox="0 0 12 12"><path d="M1 4 H3 L6 1.5 V10.5 L3 8 H1 Z" fill="#7a7a7a"/><path d="M8 3.5 V8.5 M10 2.5 V9.5" stroke="#6a6a6a" stroke-width="1"/></svg>
<div class="a" style="left:593px;top:666px;width:38px;height:2px;background:#e8c800"></div>
<div class="a" style="left:631px;top:666.3px;width:16px;height:1.5px;background:#0a0a0a"></div>
<div class="a" style="left:627px;top:662.5px;width:8.5px;height:9px;border-radius:50%;background:#f2f2f2"></div>
<div class="a" style="left:279.5px;top:677px;width:375.5px;height:1.5px;background:#111"></div>
<div class="a" style="left:279.5px;top:678.5px;width:375.5px;height:39px;background:#1f1f1f"></div>
<div class="a" style="left:310.2px;top:678.5px;width:1px;height:39px;background:#141414"></div>
<div class="a" style="left:341.8px;top:678.5px;width:1px;height:39px;background:#141414"></div>
<div class="a" style="left:373px;top:678.5px;width:1px;height:39px;background:#141414"></div>
<div class="a" style="left:404.6px;top:678.5px;width:1px;height:39px;background:#141414"></div>
<div class="a" style="left:435.5px;top:678.5px;width:1px;height:39px;background:#141414"></div>
<div class="a" style="left:624px;top:678.5px;width:1px;height:39px;background:#141414"></div>
<svg class="a" style="left:279.5px;top:678.5px" width="376" height="39" viewBox="0 0 376 39"><rect x="11.5" y="14" width="2.2" height="9.5" fill="#eaeaea"/><rect x="15.8" y="14" width="2.2" height="9.5" fill="#eaeaea"/><rect x="42.5" y="14.5" width="7" height="8" fill="#e6e6e6"/><rect x="73.5" y="14.3" width="1.8" height="9" fill="#e6e6e6"/><path d="M81 14.3 V23.3 L75.3 18.8 Z" fill="#e6e6e6"/><path d="M105 14.3 V23.3 L110.7 18.8 Z" fill="#e6e6e6"/><rect x="110.7" y="14.3" width="1.8" height="9" fill="#e6e6e6"/><path d="M136.5 20 L141 14.5 L145.5 20 Z" fill="#e6e6e6"/><rect x="136.5" y="21.5" width="9" height="1.7" fill="#e6e6e6"/><path d="M273 13.5 H280 M273 16.5 H277 M273 19.5 H276 M273 22.5 H276" stroke="#e8c800" stroke-width="1.3"/><circle cx="281" cy="19" r="3" stroke="#e8c800" stroke-width="1.6" fill="none"/><path d="M283 21 L286 24.5" stroke="#e8c800" stroke-width="1.8"/><rect x="298.5" y="12" width="10" height="14" rx="1.5" fill="#8a8a8a"/><path d="M300.8 15.5 H306.2 M300.8 18 H306.2 M300.8 20.5 H306.2 M300.8 23 H306.2" stroke="#3a3a3a" stroke-width="1"/><g transform="translate(327,18.8)" fill="#8a8a8a"><circle r="4"/><g><rect x="-1.2" y="-6" width="2.4" height="3" transform="rotate(0)"/><rect x="-1.2" y="-6" width="2.4" height="3" transform="rotate(45)"/><rect x="-1.2" y="-6" width="2.4" height="3" transform="rotate(90)"/><rect x="-1.2" y="-6" width="2.4" height="3" transform="rotate(135)"/><rect x="-1.2" y="-6" width="2.4" height="3" transform="rotate(180)"/><rect x="-1.2" y="-6" width="2.4" height="3" transform="rotate(225)"/><rect x="-1.2" y="-6" width="2.4" height="3" transform="rotate(270)"/><rect x="-1.2" y="-6" width="2.4" height="3" transform="rotate(315)"/></g><circle r="1.6" fill="#1f1f1f"/></g><path d="M356 14 H366 M356 18.8 H366 M356 23.6 H366" stroke="#e6e6e6" stroke-width="1.6"/></svg>
<div class="t" style="left:444px;top:692px;font-size:11px;color:#e8e8e8;-webkit-text-stroke-width:.4px;transform:scaleX(.71)">00:30:06</div>
<div class="t" style="left:480.5px;top:692px;font-size:11px;color:#7a7a7a;transform:scaleX(.71)">/</div>
<div class="t" style="left:487.2px;top:692px;font-size:11px;color:#8a8a8a;transform:scaleX(.72)">00:30:09</div>
<div class="a" style="left:660px;top:145.5px;width:328px;height:30.5px;background:#1c1c1c"></div>
<div class="t" style="left:665.6px;top:153.5px;font-size:11px;font-weight:bold;color:#d8d8d8;transform:scaleX(.68)">Browser</div>
<div class="a" style="left:906px;top:158px;width:30px;height:2.2px;background:#e8c800"></div>
<div class="a" style="left:934.5px;top:156px;width:9px;height:6px;border-radius:2px;background:#ececec"></div>
<svg class="a" style="left:952px;top:153px" width="32" height="14" viewBox="0 0 32 14"><path d="M1 7 H3.5 M3.5 2.5 V11.5 M3.5 4 H9.5 V10 H3.5 M9.5 2.5 V11.5" stroke="#7a7a7a" stroke-width="1.1" fill="none"/><rect x="4" y="4" width="5.5" height="6" fill="#6a6a6a"/><path d="M21.5 2.5 L29 10.5 M29 2.5 L21.5 10.5" stroke="#8a8a8a" stroke-width="1.1"/></svg>
<div class="a" style="left:660px;top:176px;width:328px;height:35px;background:#2a2a2a"></div>
<div class="a" style="left:660.2px;top:176.7px;width:55.5px;height:30px;background:#363636;border-right:1.2px solid #1c1c1c;border-bottom:1.5px solid #1c1c1c;"></div>
<div class="t" style="left:666.7px;top:184.5px;font-size:12px;color:#8a8a8a;-webkit-text-stroke:.15px #8a8a8a;transform:scaleX(0.78)">Navigovat</div>
<div class="a" style="left:716.5px;top:176.7px;width:83.20000000000005px;height:34px;background:#3c3c3c;border-right:1.2px solid #1c1c1c;"></div>
<div class="t" style="left:722.4px;top:184.5px;font-size:12px;color:#e0e0e0;-webkit-text-stroke:.15px #e0e0e0;transform:scaleX(0.746)">Prohlížeč nabídky</div>
<div class="a" style="left:800.5px;top:176.7px;width:117.5px;height:30px;background:#363636;border-right:1.2px solid #1c1c1c;border-bottom:1.5px solid #1c1c1c;"></div>
<div class="t" style="left:807.5px;top:184.5px;font-size:12px;color:#8a8a8a;-webkit-text-stroke:.15px #8a8a8a;transform:scaleX(0.767)">Nástroj procházení titulků</div>
<div class="a" style="left:919px;top:176.7px;width:69px;height:30px;background:#363636;border-bottom:1.5px solid #1c1c1c;overflow:hidden"><div class="t" style="left:2.7px;top:7.8px;font-size:12px;color:#8a8a8a;transform:scaleX(.767)">Online Sub</div></div>
<div class="a" style="left:956px;top:183px;width:13.5px;height:18px;border-radius:2px;background:#555"></div>
<div class="a" style="left:970.5px;top:183px;width:13.5px;height:18px;border-radius:2px;background:#555"></div>
<svg class="a" style="left:956px;top:183px" width="28" height="18" viewBox="0 0 28 18"><path d="M5 5 L9 9 L5 13" stroke="#d0d0d0" stroke-width="1.3" fill="none"/><path d="M18 7.5 L21 10.5 L24 7.5" stroke="#d0d0d0" stroke-width="1.3" fill="none"/></svg>
<div class="a" style="left:660px;top:210.5px;width:328px;height:507px;background:#3c3c3c"></div>
<div class="a" style="left:660px;top:206.5px;width:328px;height:4.5px;background:#3a3a3a"></div>
<div class="a" style="left:660px;top:211px;width:328px;height:21px;background:#2e2e2e"></div>
<div class="a" style="left:660px;top:232px;width:328px;height:20px;background:#333333"></div>
<svg class="a" style="left:664.5px;top:216.5px" width="10" height="10" viewBox="0 0 10 10"><path d="M0 1.5 H3.5 L4.5 2.5 H9.5 V9.5 H0 Z" fill="#f2c230"/><rect x="0" y="3.5" width="9.5" height="6" fill="#ffd860"/></svg>
<div class="a" style="left:681.5px;top:224.5px;width:1.3px;height:1.3px;background:#ccc"></div><div class="a" style="left:683.8px;top:224.5px;width:1.3px;height:1.3px;background:#ccc"></div>
<div class="a" style="left:666.5px;top:240.5px;width:5px;height:5.5px;border-radius:50%;background:#2a84f0;box-shadow:0 0 0 1px #252525"></div>
<div class="t" style="left:680.8px;top:235.5px;font-size:11.5px;color:#b8b8b8;transform:scaleX(.765)">Audio #1(Program 1) - MPEG Audio, 48.0 kHz, 2 Ch, 192 kbit/s (PID:0x006...</div>
<div class="t" style="left:686px;top:297.5px;font-size:14.5px;color:#f8f8f8;-webkit-text-stroke-width:.1px;transform:scaleX(0.989)">PF Prodelin 370 cm / Lucenec-Slovakia</div>
<div class="t" style="left:686px;top:320.2px;font-size:14.5px;color:#f8f8f8;-webkit-text-stroke-width:.1px;transform:scaleX(1.03)">f=11599,530 MHz_H_ : Medina FM</div>
<div class="t" style="left:714.4px;top:342.9px;font-size:14.5px;color:#f8f8f8;-webkit-text-stroke-width:.1px;transform:scaleX(1.009)">Locked Uptime : 25:11:01</div>
<div class="a" style="left:573px;top:80px;width:54px;height:52px;background:#fff"></div>
<svg class="a" style="left:573px;top:80px" width="54" height="52" viewBox="0 0 54 52"><path d="M11.7 43.5 A24 22.7 0 1 1 42.9 43.5" stroke="#1c2a9c" stroke-width="1.3" fill="none"/><path d="M42 9 L44.5 11.5 M50.5 28.5 L52 30.5" stroke="#fff" stroke-width="2"/><path d="M9.8 43.5 H44.4" stroke="#1c2a9c" stroke-width="1.3"/><path d="M19 7.5 L31.3 40.2 M19 7.5 Q20 8 22.5 17 M22 23 Q20 30 18 32 M20 31 L28 40" stroke="#2a3aa0" stroke-width=".8" fill="none"/><path d="M23 23 H37 L31 29" stroke="#5a6ab8" stroke-width=".7" fill="none"/><circle cx="16.5" cy="33.5" r="2.2" stroke="#2a3aa0" stroke-width=".8" fill="none"/><path d="M11 43.5 Q16 41 19 36 M19 43.5 L21 38" stroke="#2a3aa0" stroke-width=".9" fill="none"/><path d="M39.5 17 Q43 21 43.2 26.3" stroke="#d01818" stroke-width="1.7" fill="none"/><path d="M41.8 14 Q46.5 19 47.2 27" stroke="#d01818" stroke-width="1.7" fill="none"/><text x="2" y="49.8" font-family="Liberation Serif" font-weight="bold" font-size="7" fill="#1a2a8a" textLength="50.5" lengthAdjust="spacingAndGlyphs"><tspan fill="#d01818">DX</tspan>SATCS.COM</text></svg>
</body></html>
